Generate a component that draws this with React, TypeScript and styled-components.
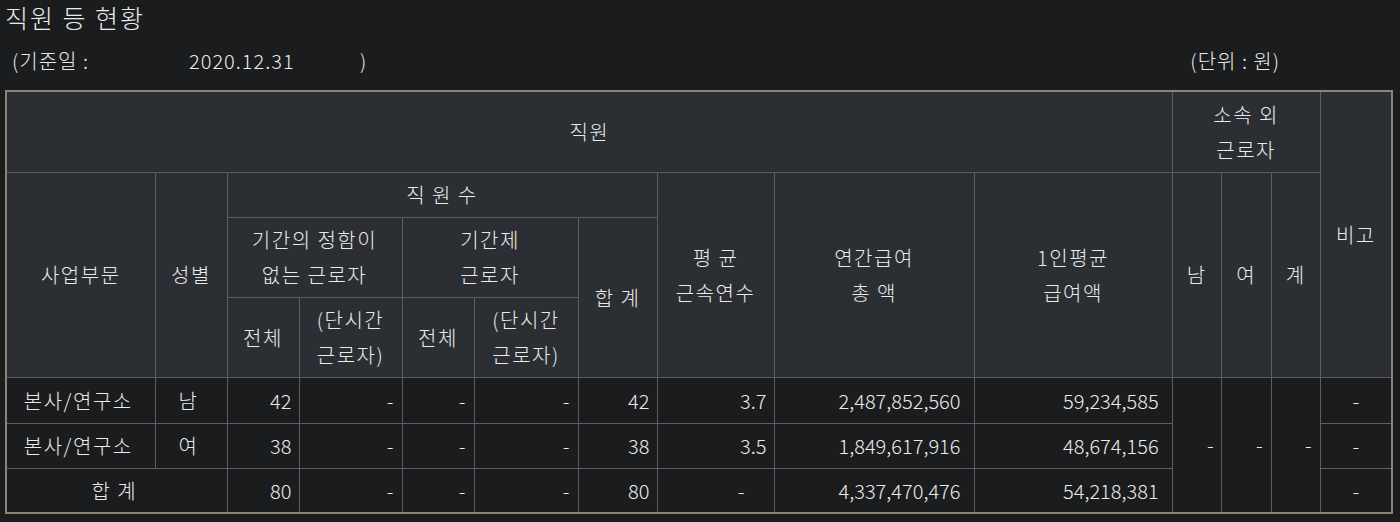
import React, { FunctionComponent, ReactElement } from 'react';
import styled, { createGlobalStyle } from 'styled-components';

const GlobalStyle = createGlobalStyle`
  html, body {
    margin: 0;
    background-color: #1b1c1e;
  }
  body {
    font-family: "Noto Sans CJK KR", "Noto Sans", sans-serif;
    font-weight: 300;
    color: #ebebeb;
  }
`;

const colors = {
  headBackground: '#2b2f33',
  bodyBackground: '#1b1c1e',
  line: '#5b5f63',
  frame: '#8d8574',
  text: '#ebebeb'
};

const Title = styled.h1`
  margin: 0;
  height: 34px;
  padding-left: 5px;
  font-size: 25px;
  font-weight: 300;
  line-height: 34px;
  letter-spacing: 2px;
`;

const InfoRow = styled.div`
  display: flex;
  align-items: center;
  height: 52px;
  margin-bottom: 4px;
  padding-left: 12px;
  padding-right: 120px;
  font-size: 20px;
  letter-spacing: 1px;
`;

const InfoCell = styled.span<{ $width?: number }>`
  ${({ $width }): string => $width ? `width: ${$width}px;` : ''}
  white-space: pre;
`;

const Unit = styled.span`
  margin-left: auto;
  white-space: pre;
`;

const Frame = styled.div`
  margin-left: 5px;
  width: 1384px;
  border: 2px solid ${colors.frame};
`;

const Table = styled.table`
  width: 1384px;
  table-layout: fixed;
  border-collapse: collapse;
  border-style: hidden;
  font-size: 20px;
`;

const Col = styled.col<{ $width: number }>`
  width: ${({ $width }): number => $width}px;
`;

const Row = styled.tr<{ $height: number }>`
  height: ${({ $height }): number => $height}px;
`;

const Head = styled.th`
  border: 1px solid ${colors.line};
  background-color: ${colors.headBackground};
  padding: 0 2px;
  font-weight: 300;
  line-height: 35px;
  letter-spacing: 1.5px;
  text-align: center;
  vertical-align: middle;
`;

const Cell = styled.td<{ $align?: 'left' | 'center' | 'right'; $pad?: number; $text?: boolean }>`
  border: 1px solid ${colors.line};
  background-color: ${colors.bodyBackground};
  padding: 0 ${({ $pad }): number => $pad ?? 7}px 0 2px;
  line-height: 35px;
  letter-spacing: ${({ $text }): string => $text ? '1.5px' : '0'};
  text-align: ${({ $align }): string => $align ?? 'right'};
  vertical-align: middle;
  white-space: nowrap;
`;

const widths = [ 148, 72, 72, 103, 72, 104, 79, 117, 200, 198, 49, 50, 49, 71 ];

interface DataRow {
  division: string;
  gender: string;
  permanent: string;
  permanentShort: string;
  fixedTerm: string;
  fixedTermShort: string;
  total: string;
  tenure: string;
  payroll: string;
  perPerson: string;
}

const rows: DataRow[] = [
  {
    division: '본사/연구소',
    gender: '남',
    permanent: '42',
    permanentShort: '-',
    fixedTerm: '-',
    fixedTermShort: '-',
    total: '42',
    tenure: '3.7',
    payroll: '2,487,852,560',
    perPerson: '59,234,585'
  },
  {
    division: '본사/연구소',
    gender: '여',
    permanent: '38',
    permanentShort: '-',
    fixedTerm: '-',
    fixedTermShort: '-',
    total: '38',
    tenure: '3.5',
    payroll: '1,849,617,916',
    perPerson: '48,674,156'
  }
];

const totalRow = {
  permanent: '80',
  permanentShort: '-',
  fixedTerm: '-',
  fixedTermShort: '-',
  total: '80',
  tenure: '-',
  payroll: '4,337,470,476',
  perPerson: '54,218,381'
};

const App: FunctionComponent = function (): ReactElement {
  return (
    <>
      <GlobalStyle />
      <Title>직원 등 현황</Title>
      <InfoRow>
        <InfoCell $width={ 177 }>(기준일 :</InfoCell>
        <InfoCell $width={ 171 }>2020.12.31</InfoCell>
        <InfoCell>)</InfoCell>
        <Unit>(단위 : 원)</Unit>
      </InfoRow>

      <Frame>
        <Table>
          <colgroup>
            { widths.map((width, index): ReactElement => <Col key={ index } $width={ width } />) }
          </colgroup>
          <thead>
            <Row $height={ 80 }>
              <Head colSpan={ 10 }>직원</Head>
              <Head colSpan={ 3 }>소속 외<br />근로자</Head>
              <Head rowSpan={ 4 }>비고</Head>
            </Row>
            <Row $height={ 45 }>
              <Head rowSpan={ 3 }>사업부문</Head>
              <Head rowSpan={ 3 }>성별</Head>
              <Head colSpan={ 5 }>직 원 수</Head>
              <Head rowSpan={ 3 }>평 균<br />근속연수</Head>
              <Head rowSpan={ 3 }>연간급여<br />총 액</Head>
              <Head rowSpan={ 3 }>1인평균<br />급여액</Head>
              <Head rowSpan={ 3 }>남</Head>
              <Head rowSpan={ 3 }>여</Head>
              <Head rowSpan={ 3 }>계</Head>
            </Row>
            <Row $height={ 80 }>
              <Head colSpan={ 2 }>기간의 정함이<br />없는 근로자</Head>
              <Head colSpan={ 2 }>기간제<br />근로자</Head>
              <Head rowSpan={ 2 }>합 계</Head>
            </Row>
            <Row $height={ 80 }>
              <Head>전체</Head>
              <Head>(단시간<br />근로자)</Head>
              <Head>전체</Head>
              <Head>(단시간<br />근로자)</Head>
            </Row>
          </thead>
          <tbody>
            { rows.map((row, index): ReactElement => (
              <Row key={ index } $height={ index === 0 ? 46 : 45 }>
                <Cell $align='center' $text={ true }>{ row.division }</Cell>
                <Cell $align='center' $text={ true }>{ row.gender }</Cell>
                <Cell>{ row.permanent }</Cell>
                <Cell $pad={ 8 }>{ row.permanentShort }</Cell>
                <Cell $pad={ 8 }>{ row.fixedTerm }</Cell>
                <Cell $pad={ 8 }>{ row.fixedTermShort }</Cell>
                <Cell>{ row.total }</Cell>
                <Cell>{ row.tenure }</Cell>
                <Cell $pad={ 13 }>{ row.payroll }</Cell>
                <Cell $pad={ 13 }>{ row.perPerson }</Cell>
                { index === 0 && (
                  <>
                    <Cell rowSpan={ 3 } $pad={ 7 }>-</Cell>
                    <Cell rowSpan={ 3 } $pad={ 8 }>-</Cell>
                    <Cell rowSpan={ 3 } $pad={ 8 }>-</Cell>
                  </>
                ) }
                <Cell $align='center' $pad={ 2 }>-</Cell>
              </Row>
            )) }
            <Row $height={ 44 }>
              <Cell colSpan={ 2 } $align='center' $text={ true }>합 계</Cell>
              <Cell>{ totalRow.permanent }</Cell>
              <Cell $pad={ 8 }>{ totalRow.permanentShort }</Cell>
              <Cell $pad={ 8 }>{ totalRow.fixedTerm }</Cell>
              <Cell $pad={ 8 }>{ totalRow.fixedTermShort }</Cell>
              <Cell>{ totalRow.total }</Cell>
              <Cell $pad={ 29 }>{ totalRow.tenure }</Cell>
              <Cell $pad={ 13 }>{ totalRow.payroll }</Cell>
              <Cell $pad={ 13 }>{ totalRow.perPerson }</Cell>
              <Cell $align='center' $pad={ 2 }>-</Cell>
            </Row>
          </tbody>
        </Table>
      </Frame>
    </>
  );
};

export default App;
